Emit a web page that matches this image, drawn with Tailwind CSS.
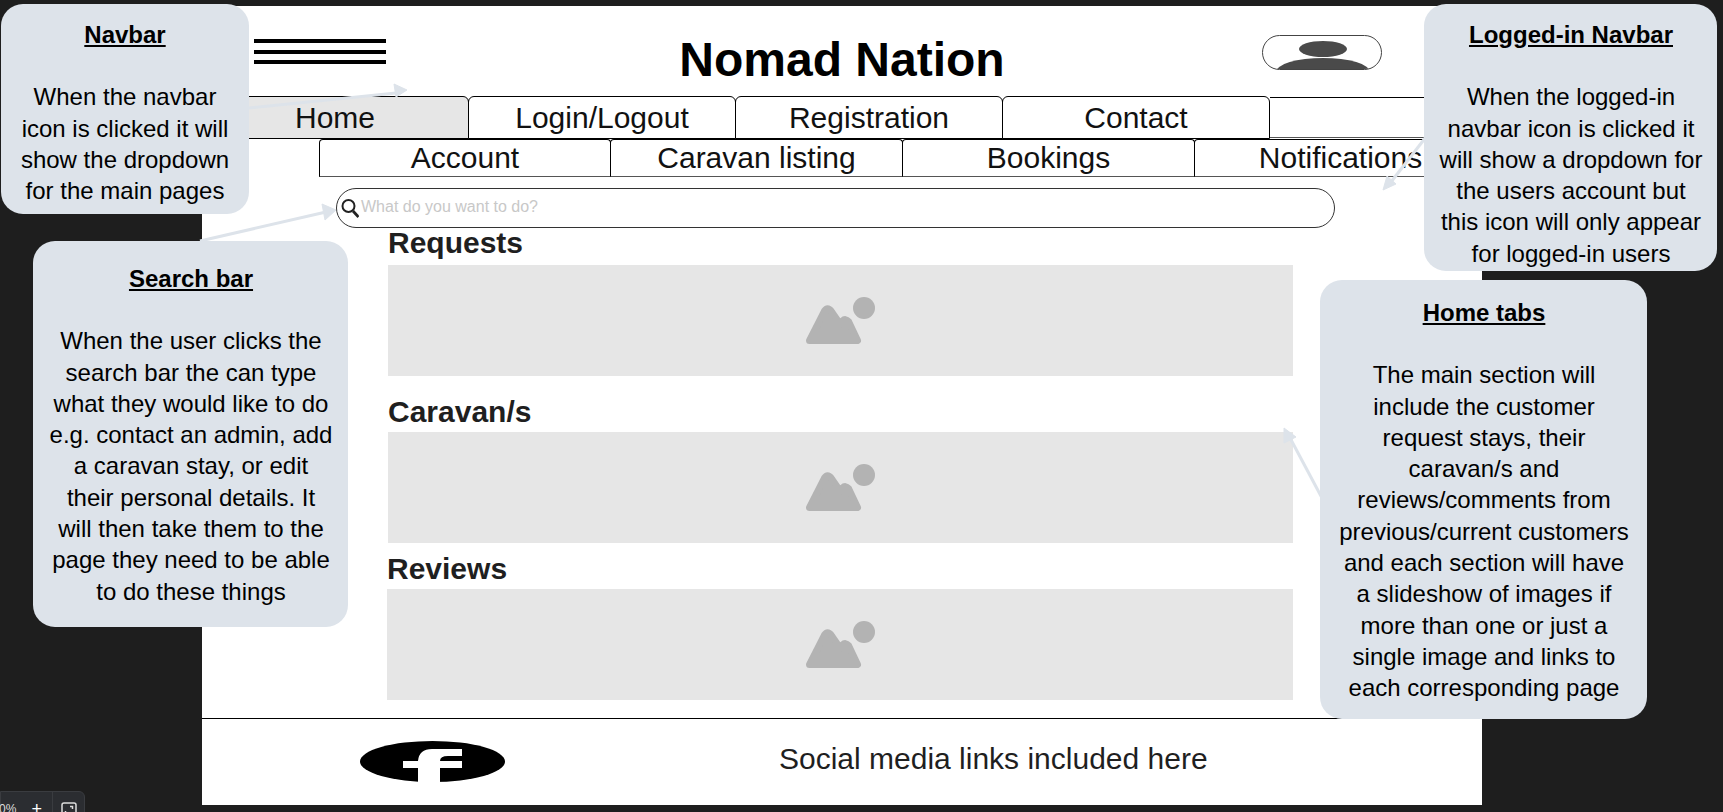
<!DOCTYPE html>
<html lang="en">
<head>
<meta charset="utf-8">
<title>Nomad Nation wireframe</title>
<script src="https://cdn.jsdelivr.net/npm/@tailwindcss/browser@4"></script>
</head>
<body class="m-0">
<div class="relative w-[1723px] h-[812px] overflow-hidden bg-[#1e1e1e] font-['Liberation_Sans',Arial,sans-serif] text-black">

  <!-- wireframe page -->
  <div class="absolute left-[202px] top-[6px] w-[1280px] h-[799px] bg-white flex flex-col">
    <div class="h-[90px] relative grid grid-cols-[1fr_auto_1fr] items-center">
      <div class="pl-[52px] pt-[1px] flex flex-col self-center">
        <div class="w-[132px] h-[4px] bg-black"></div>
        <div class="w-[132px] h-[4px] mt-[7px] bg-black"></div>
        <div class="w-[132px] h-[4px] mt-[6px] bg-black"></div>
      </div>
      <div class="text-[48px] font-bold leading-none pt-[18px]">Nomad Nation</div>
      <div class="pl-[257px] pt-[3px]">
        <div class="relative w-[120px] h-[35px] rounded-[17.5px] border border-[#444] overflow-hidden">
          <div class="absolute left-[36px] top-[5px] w-[48px] h-[16px] rounded-[50%] bg-[#4a4a4a]"></div>
          <div class="absolute left-[13px] top-[22px] w-[94px] h-[28px] rounded-[50%] bg-[#4a4a4a]"></div>
        </div>
      </div>
    </div>

    <div class="flex h-[43px] -ml-[1px] text-[30px] text-[#111] leading-none">
      <div class="w-[268px] shrink-0 flex items-center justify-center border border-black rounded-t-md bg-[#e6e6e6]">Home</div>
      <div class="w-[268px] shrink-0 -ml-[1px] flex items-center justify-center border border-black rounded-t-md">Login/Logout</div>
      <div class="w-[268px] shrink-0 -ml-[1px] flex items-center justify-center border border-black rounded-t-md">Registration</div>
      <div class="w-[268px] shrink-0 -ml-[1px] flex items-center justify-center border border-black rounded-t-md">Contact</div>
      <div class="flex-1 mt-[1px] h-[41px] border-y border-black border-b-[#555]"></div>
    </div>

    <div class="flex h-[38px] ml-[117px] text-[30px] text-[#111] leading-none">
      <div class="w-[292px] shrink-0 flex items-center justify-center border border-black border-b-[#555] rounded-t-sm">Account</div>
      <div class="w-[293px] shrink-0 -ml-[1px] flex items-center justify-center border border-black border-b-[#555] rounded-t-sm">Caravan listing</div>
      <div class="w-[293px] shrink-0 -ml-[1px] flex items-center justify-center border border-black border-b-[#555] rounded-t-sm">Bookings</div>
      <div class="w-[293px] shrink-0 -ml-[1px] flex items-center justify-center border border-black border-b-[#555] rounded-t-sm">Notifications</div>
    </div>

    <div class="mt-[11px] ml-[134px] w-[999px] h-[40px] rounded-[20px] border border-[#333] flex items-center pl-[4px] gap-[2px]">
      <svg class="w-[18px] h-[20px] shrink-0" viewBox="0 0 18 20" fill="none" stroke="#222"><circle cx="7.5" cy="8" r="6" stroke-width="2"/><path d="M12 13 L17.5 19" stroke-width="2.8"/></svg>
      <span class="text-[16px] text-[#c8c8c8] leading-none -mt-[2px]">What do you want to do?</span>
    </div>

    <div class="ml-[186px] w-[905px] flex flex-col text-[#1f1f1f]">
      <h2 class="h-[37px] pb-[8px] flex items-center text-[30px] font-bold leading-none">Requests</h2>
      <div class="h-[111px] bg-[#e6e6e6] flex items-center justify-center">
        <svg class="w-[69px] h-[47px]" viewBox="-1 0 69 47" fill="#b3b3b3"><circle cx="57" cy="11" r="11"/><path d="M2.5 43.5 L17.5 14 Q20.5 9.5 24 14 L33 27 L35.5 24 Q38.5 21 41.5 24.5 L50.5 43.5 Z" stroke="#b3b3b3" stroke-width="7" stroke-linejoin="round"/></svg>
      </div>
      <h2 class="mt-[19px] h-[37px] pb-[4px] flex items-center text-[30px] font-bold leading-none">Caravan/s</h2>
      <div class="h-[111px] bg-[#e6e6e6] flex items-center justify-center">
        <svg class="w-[69px] h-[47px]" viewBox="-1 0 69 47" fill="#b3b3b3"><circle cx="57" cy="11" r="11"/><path d="M2.5 43.5 L17.5 14 Q20.5 9.5 24 14 L33 27 L35.5 24 Q38.5 21 41.5 24.5 L50.5 43.5 Z" stroke="#b3b3b3" stroke-width="7" stroke-linejoin="round"/></svg>
      </div>
      <h2 class="mt-[9px] -ml-[1px] h-[37px] pb-[4px] flex items-center text-[30px] font-bold leading-none">Reviews</h2>
      <div class="-ml-[1px] h-[111px] bg-[#e6e6e6] flex items-center justify-center">
        <svg class="w-[69px] h-[47px]" viewBox="-1 0 69 47" fill="#b3b3b3"><circle cx="57" cy="11" r="11"/><path d="M2.5 43.5 L17.5 14 Q20.5 9.5 24 14 L33 27 L35.5 24 Q38.5 21 41.5 24.5 L50.5 43.5 Z" stroke="#b3b3b3" stroke-width="7" stroke-linejoin="round"/></svg>
      </div>
    </div>

    <div class="mt-[18px] flex-1 border-t border-black flex items-center pl-[158px] pb-[1px]">
      <svg class="w-[145px] h-[41px] shrink-0" viewBox="0 0 145 41"><ellipse cx="72.5" cy="20.5" rx="72.5" ry="20.5" fill="#000"/><path d="M43 20 H58 Q59 8 72 8 H102 V15 H88 Q80 15 80 20 H102 V27 H80 V41 H58 V27 H43 Z" fill="#fff"/></svg>
      <span class="ml-[274px] -mt-[6px] text-[30px] leading-none text-[#1f1f1f]">Social media links included here</span>
    </div>
  </div>

  <!-- annotation arrows -->
  <svg class="absolute left-0 top-0 w-[1723px] h-[812px] pointer-events-none" viewBox="0 0 1723 812" fill="#dde3ea" stroke="#dde3ea">
    <path d="M240 109 L396 93" stroke-width="3" fill="none"/>
    <path d="M407 90 L394 84 L396 97 Z" stroke-width="1"/>
    <path d="M200 241 L326 212" stroke-width="3" fill="none"/>
    <path d="M336 210 L322 204 L325 220 Z" stroke-width="1"/>
    <path d="M1426 137 L1391 182" stroke-width="3" fill="none"/>
    <path d="M1383 190 L1396 184 L1387 176 Z" stroke-width="1"/>
    <path d="M1322 498 L1289 436" stroke-width="3" fill="none"/>
    <path d="M1284 428 L1284 443 L1296 437 Z" stroke-width="1"/>
  </svg>

  <!-- callouts -->
  <div class="absolute left-[1px] top-[4px] w-[248px] h-[210px] rounded-[22px] bg-[#dde3ea] pt-[15px] text-center text-[24px] leading-[31.3px]">
    <p class="font-bold underline">Navbar</p>
    <p class="mt-[31px]">When the navbar<br>icon is clicked it will<br>show the dropdown<br>for the main pages</p>
  </div>

  <div class="absolute left-[1424px] top-[4px] w-[293px] h-[267px] rounded-[22px] bg-[#dde3ea] pt-[15px] pl-[1px] text-center text-[24px] leading-[31.3px]">
    <p class="font-bold underline">Logged-in Navbar</p>
    <p class="mt-[31px]">When the logged-in<br>navbar icon is clicked it<br>will show a dropdown for<br>the users account but<br>this icon will only appear<br>for logged-in users</p>
  </div>

  <div class="absolute left-[33px] top-[241px] w-[315px] h-[386px] rounded-[22px] bg-[#dde3ea] pt-[22px] pl-[1px] text-center text-[24px] leading-[31.3px]">
    <p class="font-bold underline">Search bar</p>
    <p class="mt-[31px]">When the user clicks the<br>search bar the can type<br>what they would like to do<br>e.g. contact an admin, add<br>a caravan stay, or edit<br>their personal details. It<br>will then take them to the<br>page they need to be able<br>to do these things</p>
  </div>

  <div class="absolute left-[1320px] top-[280px] w-[327px] h-[439px] rounded-[22px] bg-[#dde3ea] pt-[17px] pl-[1px] text-center text-[24px] leading-[31.3px]">
    <p class="font-bold underline">Home tabs</p>
    <p class="mt-[31px]">The main section will<br>include the customer<br>request stays, their<br>caravan/s and<br>reviews/comments from<br>previous/current customers<br>and each section will have<br>a slideshow of images if<br>more than one or just a<br>single image and links to<br>each corresponding page</p>
  </div>

  <!-- zoom toolbar -->
  <div class="absolute left-0 top-[791px] w-[85px] h-[30px] bg-[#2b2d31] border border-[#3a3c40] rounded-tr-md flex text-white text-[12px] leading-none">
    <div class="w-[53px] flex justify-between pr-[10px] pt-[11px] -ml-[2px]"><span class="text-[#ddd]">0%</span><span class="text-[18px] -mt-[3px]">+</span></div>
    <div class="flex-1 border-l border-[#3a3c40] pl-[8px] pt-[10px]">
      <svg class="w-[16px] h-[16px]" viewBox="0 0 16 16" fill="none" stroke="#ddd" stroke-width="1.5"><rect x="1" y="1" width="14" height="14" rx="2"/><path d="M9 4.5 H11.5 V7 M7 11.5 H4.5 V9"/></svg>
    </div>
  </div>
</div>
</body>
</html>
